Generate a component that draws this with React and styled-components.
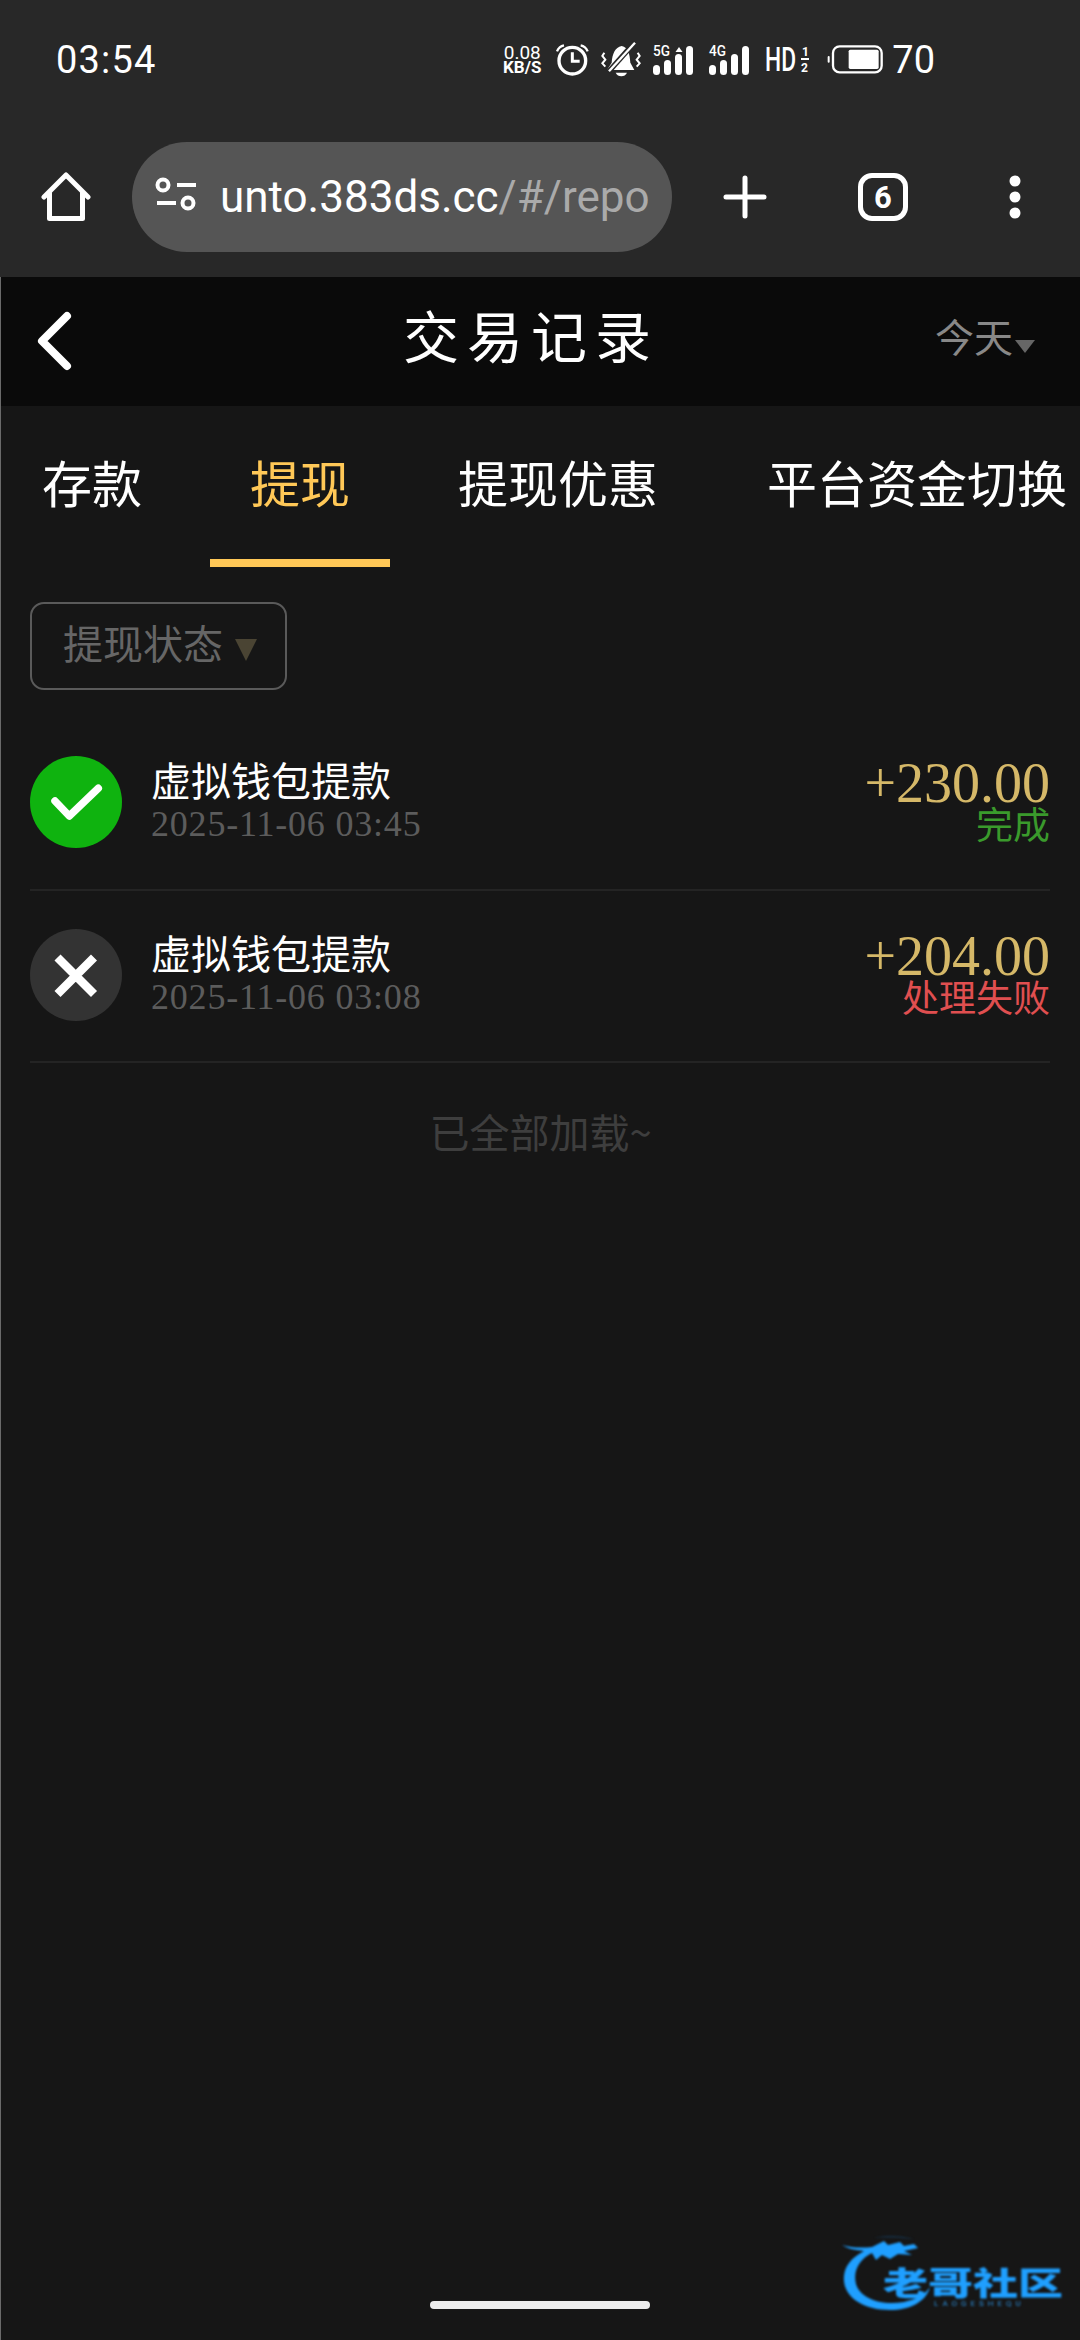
import React from "react";
import styled, { createGlobalStyle } from "styled-components";

const sans = `"Noto Sans CJK SC", "Noto Sans", sans-serif`;
const numeric = `"Liberation Serif", "Noto Sans CJK SC", serif`;
const ui = `Roboto, "Noto Sans", sans-serif`;

const Global = createGlobalStyle`
  html, body { margin: 0; padding: 0; background: #161616; }
  * { box-sizing: border-box; }
`;

const Screen = styled.div`
  position: relative;
  width: 1080px;
  height: 2340px;
  overflow: hidden;
  background: #161616;
  font-family: ${sans};
`;

/* ---- system status bar and browser toolbar ---- */
const Chrome = styled.header`
  height: 277px;
  background: #282828;
  display: flex;
  flex-direction: column;
`;

const StatusBar = styled.div`
  height: 120px;
  padding: 0 145px 0 56px;
  display: flex;
  align-items: center;
  color: #fff;
  font-family: ${ui};
`;

const Clock = styled.span`
  font-size: 38px;
  letter-spacing: 1.2px;
  margin-right: auto;
`;

const NetSpeed = styled.div`
  width: 42px;
  display: flex;
  flex-direction: column;
  align-items: center;
  line-height: 15px;
  margin-right: 12px;
  span { font-size: 19px; }
  b { font-size: 17px; font-weight: 700; white-space: nowrap; }
`;

const StatusIcon = styled.svg`
  display: block;
  flex: none;
  overflow: visible;
  margin-right: ${(p) => p.$after ?? 12}px;
`;

const BatteryLevel = styled.span`
  font-size: 38px;
`;

const Toolbar = styled.div`
  height: 157px;
  padding: 22px 0 25px;
  display: flex;
  align-items: center;
  color: #fff;
  font-family: ${ui};
`;

const ToolIcon = styled.svg`
  display: block;
  flex: none;
`;

const AddressPill = styled.div`
  width: 540px;
  height: 110px;
  margin-left: 41px;
  padding-left: 22px;
  border-radius: 55px;
  background: #555;
  display: flex;
  align-items: center;
  gap: 22px;
  overflow: hidden;
`;

const UrlText = styled.div`
  font-size: 44px;
  white-space: nowrap;
  span { color: #aaa; }
`;

const TabCount = styled.div`
  width: 50px;
  height: 48px;
  margin-left: 91px;
  flex: none;
  border: 5px solid #fff;
  border-radius: 14px;
  display: flex;
  align-items: center;
  justify-content: center;
  font-size: 31px;
  font-weight: 700;
  line-height: 1;
`;

/* ---- page ---- */
const Page = styled.main`
  border-left: 1px solid #6a6a6a;
  height: 2063px;
`;

const TitleBar = styled.div`
  height: 129px;
  background: #0a0a0a;
  padding: 0 45px 14px 30px;
  display: grid;
  grid-template-columns: 372px auto 1fr;
  align-items: center;
`;

const Title = styled.h1`
  margin: -2px 0 0;
  font-size: 56px;
  font-weight: 400;
  letter-spacing: 8px;
  color: #fff;
  line-height: 1.2;
`;

const RangePicker = styled.div`
  justify-self: end;
  display: flex;
  align-items: center;
  gap: 2px;
  margin-top: 0;
  font-size: 39px;
  color: #888;
`;

const Caret = styled.i`
  display: block;
  width: 0;
  height: 0;
  border-left: ${(p) => p.$w / 2}px solid transparent;
  border-right: ${(p) => p.$w / 2}px solid transparent;
  border-top: ${(p) => p.$h}px solid ${(p) => p.$color};
  margin-top: ${(p) => p.$top}px;
`;

const Tabs = styled.nav`
  height: 161px;
  display: flex;
  gap: 27px;
  white-space: nowrap;
`;

const Tab = styled.div`
  padding: 0 41px 4px;
  display: flex;
  align-items: center;
  font-size: 50px;
  line-height: 1.2;
  color: ${(p) => (p.$active ? "#ffc857" : "#fff")};
  border-bottom: 8px solid ${(p) => (p.$active ? "#ffc857" : "transparent")};
  width: ${(p) => (p.$active ? "180px" : "auto")};
  justify-content: center;
  flex: none;
`;

const FilterRow = styled.div`
  padding: 35px 0 28px 29px;
`;

const FilterButton = styled.div`
  width: 257px;
  height: 88px;
  border: 2px solid #5a5a5a;
  border-radius: 14px;
  padding: 0 0 9px 31px;
  display: flex;
  align-items: center;
  gap: 12px;
  font-size: 40px;
  color: #666;
`;

const Records = styled.section`
  padding: 0 30px 0 29px;
`;

const Record = styled.article`
  height: 172.5px;
  border-bottom: 2px solid #242424;
  display: flex;
  align-items: center;
  padding-bottom: 2px;
`;

const StatusBadge = styled.div`
  width: 92px;
  height: 92px;
  border-radius: 50%;
  flex: none;
  background: ${(p) => p.$bg};
  svg { display: block; }
`;

const RecordText = styled.div`
  margin-left: 29px;
  flex: 1;
`;

const RecordTitle = styled.div`
  font-size: 40px;
  line-height: 45px;
  color: #fff;
`;

const RecordTime = styled.div`
  font-family: ${numeric};
  font-size: 36px;
  letter-spacing: 0.8px;
  line-height: 45px;
  color: #5c5c5c;
`;

const RecordSide = styled.div`
  padding-top: 2px;
  text-align: right;
`;

const Amount = styled.div`
  font-family: ${numeric};
  font-size: 56px;
  line-height: 46px;
  color: #d5b868;
`;

const Outcome = styled.div`
  font-size: 37px;
  line-height: 40px;
  margin: -3px 0 3px;
  color: ${(p) => p.$color};
`;

const EndNote = styled.div`
  margin-top: 42.5px;
  text-align: center;
  font-size: 40px;
  line-height: 50px;
  color: #3e3e3e;
`;

/* ---- overlays ---- */
const HomeBar = styled.div`
  position: absolute;
  left: 430px;
  top: 2301px;
  width: 220px;
  height: 8px;
  border-radius: 4px;
  background: #ececec;
`;

const Watermark = styled.div`
  position: absolute;
  left: 842px;
  top: 2236px;
  width: 225px;
  height: 80px;
  color: #1f9fff;
  filter: blur(0.8px);
  svg { position: absolute; left: 0; top: 0; }
`;

const WatermarkName = styled.div`
  position: absolute;
  left: 41px;
  top: 29px;
  font-size: 45px;
  font-weight: 900;
  line-height: 45px;
  white-space: nowrap;
  transform: scaleY(0.72);
  transform-origin: top left;
`;

const WatermarkLatin = styled.div`
  position: absolute;
  left: 92px;
  top: 63px;
  font-family: ${ui};
  font-size: 8px;
  line-height: 9px;
  letter-spacing: 4px;
  color: #2a8fdc;
  white-space: nowrap;
`;

/* ---- drawn icons ---- */
const AlarmIcon = () => (
  <StatusIcon width="35" height="32" viewBox="0 0 105 96" $after={11} fill="none" stroke="#fff">
    <circle cx="52" cy="50" r="40" strokeWidth="10" />
    <path d="M52 25v27h22" strokeWidth="9" />
    <path d="M6 22C10 12 17 6 27 4M98 22C94 12 87 6 77 4" strokeWidth="7" />
  </StatusIcon>
);

const MutedBellIcon = () => (
  <StatusIcon width="40" height="36" viewBox="0 0 120 108" $after={12} fill="none">
    <path d="M62 12C42 16 34 36 32 62L18 84H100L88 62C86 36 82 16 62 12Z" fill="#fff" />
    <path d="M100 2L22 90" stroke="#282828" strokeWidth="16" />
    <path d="M102 2L24 88" stroke="#fff" strokeWidth="7" />
    <path d="M44 92C50 106 72 106 78 92Z" fill="#fff" />
    <path d="M10 32l-6 10 9 11-9 11 9 10M110 32l6 10-9 11 9 11-9 10" stroke="#fff" strokeWidth="6" />
  </StatusIcon>
);

const SignalIcon = ({ label, bars, arrow }) => (
  <StatusIcon width="42" height="39" viewBox="0 -4 42 39" $after={14} fill="#fff">
    <text x="0" y="11" fontFamily="Roboto, sans-serif" fontSize="15" fontWeight="500" textLength="17" lengthAdjust="spacingAndGlyphs">{label}</text>
    {bars.map(([x, y]) => (
      <rect key={x} x={x} y={y} width="7" height={30 - y} rx="3.5" />
    ))}
    {arrow && <path d="M22.5 7l3.5-5 3.5 5z" />}
  </StatusIcon>
);

const HdIcon = () => (
  <StatusIcon width="45" height="42" viewBox="0 -6 45 42" $after={17} fill="#fff">
    <text x="0" y="26" textLength="31" lengthAdjust="spacingAndGlyphs" fontFamily="Roboto, sans-serif" fontSize="33" fontWeight="500">HD</text>
    <text x="37" y="11" fontFamily="Roboto, sans-serif" fontSize="12" fontWeight="700">1</text>
    <rect x="36" y="13" width="8" height="2" />
    <text x="36" y="27" fontFamily="Roboto, sans-serif" fontSize="12" fontWeight="700">2</text>
  </StatusIcon>
);

const BatteryIcon = () => (
  <StatusIcon width="57" height="30" viewBox="0 0 171 90" $after={8} fill="#fff">
    <rect x="18" y="4" width="146" height="78" rx="20" fill="none" stroke="#fff" strokeWidth="7" />
    <rect x="65" y="14" width="90" height="58" rx="5" />
    <rect x="2" y="33" width="6" height="20" rx="3" />
  </StatusIcon>
);

const HomeIcon = () => (
  <ToolIcon width="50" height="50" viewBox="0 0 50 50" fill="none" stroke="#fff" strokeWidth="5" strokeLinejoin="round" strokeLinecap="round" style={{ marginLeft: 41 }}>
    <path d="M3 25L25 3l22 22" />
    <path d="M8.5 21v25.5h33V21" />
  </ToolIcon>
);

const SiteSettingsIcon = () => (
  <ToolIcon width="44" height="44" viewBox="0 0 44 44" fill="none" stroke="#fff" strokeWidth="4">
    <circle cx="9" cy="10" r="5.5" />
    <path d="M23 10h19M3 28h19" />
    <circle cx="34" cy="28" r="5.5" />
  </ToolIcon>
);

const PlusIcon = () => (
  <ToolIcon width="44" height="44" viewBox="0 0 44 44" fill="none" stroke="#fff" strokeWidth="5" strokeLinecap="round" style={{ marginLeft: 51 }}>
    <path d="M22 3v38M3 22h38" />
  </ToolIcon>
);

const MoreIcon = () => (
  <ToolIcon width="12" height="48" viewBox="0 0 12 48" fill="#fff" style={{ marginLeft: 101 }}>
    <circle cx="6" cy="8" r="5.5" />
    <circle cx="6" cy="24" r="5.5" />
    <circle cx="6" cy="40" r="5.5" />
  </ToolIcon>
);

const BackIcon = () => (
  <svg width="40" height="60" viewBox="0 0 40 60" fill="none" stroke="#fff" strokeWidth="8" strokeLinecap="round" strokeLinejoin="round" style={{ display: "block", marginLeft: 4, marginTop: 12 }}>
    <path d="M32 5L7 30l25 25" />
  </svg>
);

const CheckGlyph = () => (
  <svg width="92" height="92" viewBox="0 0 92 92" fill="none" stroke="#fff" strokeWidth="7.5" strokeLinecap="round" strokeLinejoin="round">
    <path d="M25 45l14.3 15 29-27.7" />
  </svg>
);

const CrossGlyph = () => (
  <svg width="92" height="92" viewBox="0 0 92 92" fill="none" stroke="#fff" strokeWidth="8.5">
    <path d="M27.5 28.5l36.5 36.5M64 28.5L27.5 65" />
  </svg>
);

const DragonSwoosh = () => (
  <svg width="110" height="80" viewBox="0 0 110 80" fill="#1f9fff">
    <path d="M0 9C10 12 20 12 30 11L42 5 46 9 58 6 62 10 72 8 76 12 62 15 70 19 56 18 48 23 40 19 34 24 30 17C16 24 11 36 14 48 18 62 38 70 62 66 74 63 82 60 88 51 84 66 68 74 48 74 20 74 0 60 2 40 3 30 9 22 22 15 14 14 6 13 0 9Z" />
    <path d="M32 2C42-1 62-1 72 4 66 2 46 1 32 2Z" fill="#16324a" />
  </svg>
);

const records = [
  { id: 1, ok: true, time: "2025-11-06 03:45", amount: "+230.00", outcome: "完成", color: "#3a9a2c" },
  { id: 2, ok: false, time: "2025-11-06 03:08", amount: "+204.00", outcome: "处理失败", color: "#e04f50" },
];

const tabs = ["存款", "提现", "提现优惠", "平台资金切换"];

export default function App() {
  return (
    <Screen>
      <Global />
      <Chrome>
        <StatusBar>
          <Clock>03:54</Clock>
          <NetSpeed>
            <span>0.08</span>
            <b>KB/S</b>
          </NetSpeed>
          <AlarmIcon />
          <MutedBellIcon />
          <SignalIcon label="5G" arrow bars={[[0, 20], [11, 15], [22, 9], [33, 1]]} />
          <SignalIcon label="4G" bars={[[0, 20], [11, 15], [22, 9], [33, 1]]} />
          <HdIcon />
          <BatteryIcon />
          <BatteryLevel>70</BatteryLevel>
        </StatusBar>
        <Toolbar>
          <HomeIcon />
          <AddressPill>
            <SiteSettingsIcon />
            <UrlText>
              unto.383ds.cc<span>/#/repo</span>
            </UrlText>
          </AddressPill>
          <PlusIcon />
          <TabCount>6</TabCount>
          <MoreIcon />
        </Toolbar>
      </Chrome>

      <Page>
        <TitleBar>
          <BackIcon />
          <Title>交易记录</Title>
          <RangePicker>
            今天
            <Caret $w={20} $h={13} $color="#666" $top={24} />
          </RangePicker>
        </TitleBar>

        <Tabs>
          {tabs.map((t) => (
            <Tab key={t} $active={t === "提现"}>{t}</Tab>
          ))}
        </Tabs>

        <FilterRow>
          <FilterButton>
            提现状态
            <Caret $w={22} $h={22} $color="#4a4433" $top={16} />
          </FilterButton>
        </FilterRow>

        <Records>
          {records.map((r) => (
            <Record key={r.id}>
              <StatusBadge $bg={r.ok ? "#0fb30f" : "#333"}>
                {r.ok ? <CheckGlyph /> : <CrossGlyph />}
              </StatusBadge>
              <RecordText>
                <RecordTitle>虚拟钱包提款</RecordTitle>
                <RecordTime>{r.time}</RecordTime>
              </RecordText>
              <RecordSide>
                <Amount>{r.amount}</Amount>
                <Outcome $color={r.color}>{r.outcome}</Outcome>
              </RecordSide>
            </Record>
          ))}
        </Records>

        <EndNote>已全部加载~</EndNote>
      </Page>

      <Watermark>
        <DragonSwoosh />
        <WatermarkName>老哥社区</WatermarkName>
        <WatermarkLatin>LAOGESHEQU</WatermarkLatin>
      </Watermark>
      <HomeBar />
    </Screen>
  );
}
